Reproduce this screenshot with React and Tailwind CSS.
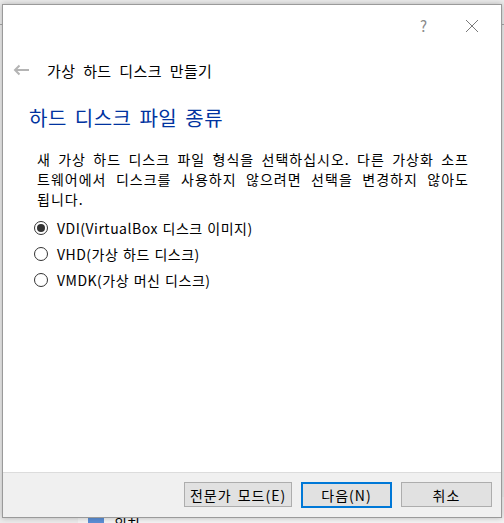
import React, { useState } from 'react';

const font = { fontFamily: '"Malgun Gothic", "Noto Sans CJK KR", "Noto Sans", sans-serif' };

function Radio({ checked, label, onClick }) {
  return (
    <button onClick={onClick} className="flex items-center gap-[9px] h-[26px] text-left cursor-default">
      <span className="w-[14px] h-[14px] rounded-full border border-[#333333] bg-white flex items-center justify-center">
        {checked && <span className="w-[8px] h-[8px] rounded-full bg-[#333333]" />}
      </span>
      <span className="text-[14px] text-[#000000] leading-none tracking-[0.5px] [word-spacing:1px]">{label}</span>
    </button>
  );
}

export default function App() {
  const [format, setFormat] = useState('vdi');

  const options = [
    { id: 'vdi', label: 'VDI(VirtualBox 디스크 이미지)' },
    { id: 'vhd', label: 'VHD(가상 하드 디스크)' },
    { id: 'vmdk', label: 'VMDK(가상 머신 디스크)' },
  ];

  return (
    <div className="relative w-[504px] h-[523px] overflow-hidden bg-[#ececec]" style={font}>
      {/* Window behind the dialog */}
      <div className="absolute left-0 right-0 top-[24px] h-px bg-[#a8a8a8]" />
      <div className="absolute left-[78px] right-0 top-[497px] bottom-0 bg-[#f4f4f4] flex items-end gap-[10px] pl-[10px]">
        <span className="w-[16px] h-[8px] mb-0 bg-[#5b8fd6] rounded-t-[2px]" />
        <span className="text-[14px] leading-none text-black translate-y-[7px]">위치</span>
      </div>

      {/* Dialog */}
      <div className="relative ml-[2px] mt-[4px] w-[500px] h-[514px] bg-white border border-[#9a9a9a] shadow-[0_0_6px_rgba(0,0,0,0.25)] flex flex-col">
        {/* Title bar */}
        <div className="h-[40px] flex items-center justify-end pr-[22px] gap-[38px] text-[#8a8a8a]">
          <span className="text-[15px] leading-none">?</span>
          <svg width="14" height="14" viewBox="0 0 14 14" className="mt-[1px]">
            <path d="M1 1 L13 13 M13 1 L1 13" stroke="#7a7a7a" strokeWidth="1" fill="none" />
          </svg>
        </div>

        {/* Header with back arrow */}
        <div className="flex items-center h-[50px] pl-[10px]">
          <svg width="17" height="12" viewBox="0 0 17 12">
            <path d="M16 6 H2 M6.5 1.5 L2 6 L6.5 10.5" stroke="#b4b4b4" strokeWidth="2" fill="none" />
          </svg>
          <span className="ml-[17px] text-[15px] text-black leading-none tracking-[0.4px] [word-spacing:4px]">
            가상 하드 디스크 만들기
          </span>
        </div>

        {/* Content */}
        <div className="flex-1 pl-[26px] pr-[10px] pt-[13px]">
          <h1 className="text-[20px] text-[#0033a0] leading-none font-normal tracking-[0.5px] [word-spacing:3px]">
            하드 디스크 파일 종류
          </h1>
          <div className="mt-[21px] ml-[8px] w-[432px] text-[14px] leading-[20px] text-black tracking-[1px] whitespace-nowrap">
            <p className="text-justify [text-align-last:justify]">
              새 가상 하드 디스크 파일 형식을 선택하십시오. 다른 가상화 소프
            </p>
            <p className="text-justify [text-align-last:justify]">
              트웨어에서 디스크를 사용하지 않으려면 선택을 변경하지 않아도
            </p>
            <p>됩니다.</p>
          </div>
          <div className="mt-[6px] ml-[5px] flex flex-col">
            {options.map((o) => (
              <Radio key={o.id} checked={format === o.id} label={o.label} onClick={() => setFormat(o.id)} />
            ))}
          </div>
        </div>

        {/* Footer */}
        <div className="h-[45px] bg-[#f0f0f0] border-t border-[#dcdcdc] flex items-center justify-end gap-[9px] pr-[9px] pb-[1px]">
          <button className="w-[108px] h-[25px] bg-[#e1e1e1] border border-[#adadad] text-[14px] leading-none text-black tracking-[1px] [word-spacing:2px]">
            전문가 모드(E)
          </button>
          <button className="w-[91px] h-[26px] bg-[#e1e1e1] border-2 border-[#0078d7] text-[14px] leading-none text-black tracking-[1px]">
            다음(N)
          </button>
          <button className="w-[91px] h-[25px] bg-[#e1e1e1] border border-[#adadad] text-[14px] leading-none text-black tracking-[1px]">
            취소
          </button>
        </div>
      </div>
    </div>
  );
}
